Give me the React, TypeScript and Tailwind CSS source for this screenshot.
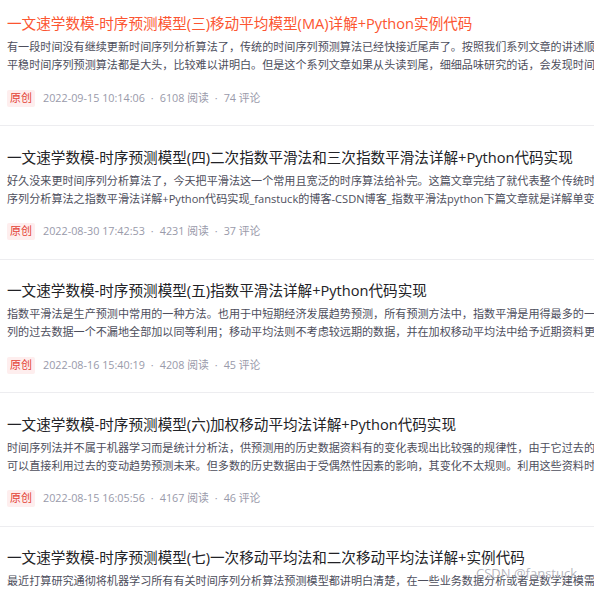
import React from "react";

type Item = {
  title: string;
  l1: string;
  l2?: string;
  date: string;
  views: string;
  comments: string;
  active?: boolean;
};

const items: Item[] = [
  {
    title: "一文速学数模-时序预测模型(三)移动平均模型(MA)详解+Python实例代码",
    l1: "有一段时间没有继续更新时间序列分析算法了，传统的时间序列预测算法已经快接近尾声了。按照我们系列文章的讲述顺序，接下来",
    l2: "平稳时间序列预测算法都是大头，比较难以讲明白。但是这个系列文章如果从头读到尾，细细品味研究的话，会发现时间序列",
    date: "2022-09-15 10:14:06",
    views: "6108",
    comments: "74",
    active: true,
  },
  {
    title: "一文速学数模-时序预测模型(四)二次指数平滑法和三次指数平滑法详解+Python代码实现",
    l1: "好久没来更时间序列分析算法了，今天把平滑法这一个常用且宽泛的时序算法给补完。这篇文章完结了就代表整个传统时间",
    l2: "序列分析算法之指数平滑法详解+Python代码实现_fanstuck的博客-CSDN博客_指数平滑法python下篇文章就是详解单变量",
    date: "2022-08-30 17:42:53",
    views: "4231",
    comments: "37",
  },
  {
    title: "一文速学数模-时序预测模型(五)指数平滑法详解+Python代码实现",
    l1: "指数平滑法是生产预测中常用的一种方法。也用于中短期经济发展趋势预测，所有预测方法中，指数平滑是用得最多的一种。",
    l2: "列的过去数据一个不漏地全部加以同等利用；移动平均法则不考虑较远期的数据，并在加权移动平均法中给予近期资料更大的权重",
    date: "2022-08-16 15:40:19",
    views: "4208",
    comments: "45",
  },
  {
    title: "一文速学数模-时序预测模型(六)加权移动平均法详解+Python代码实现",
    l1: "时间序列法并不属于机器学习而是统计分析法，供预测用的历史数据资料有的变化表现出比较强的规律性，由于它过去的变动趋势",
    l2: "可以直接利用过去的变动趋势预测未来。但多数的历史数据由于受偶然性因素的影响，其变化不太规则。利用这些资料时",
    date: "2022-08-15 16:05:56",
    views: "4167",
    comments: "46",
  },
  {
    title: "一文速学数模-时序预测模型(七)一次移动平均法和二次移动平均法详解+实例代码",
    l1: "最近打算研究通彻将机器学习所有有关时间序列分析算法预测模型都讲明白清楚，在一些业务数据分析或者是数学建模需求中",
    l2: "经常会用到时间序列分析算法，所以本系列文章将会把时间序列分析算法全部讲解清楚",
    date: "2022-08-10 11:20:31",
    views: "3980",
    comments: "40",
  },
];

const font = {
  fontFamily: '"Open Sans", "Noto Sans CJK SC", sans-serif',
};

export default function App() {
  return (
    <div
      className="relative h-[590px] w-[594px] overflow-hidden bg-white"
      style={font}
    >
      <div className="-mt-[7.5px] w-[900px]">
        {items.map((it, i) => (
          <div
            key={i}
            className="border-b border-[#ededf0] pl-[7px] pt-[20.5px] pb-[19px]"
          >
            <div
              className={`h-[20px] whitespace-nowrap text-[14.6px] leading-[20px] ${
                it.active ? "text-[#fc5531]" : "text-[#222226]"
              }`}
            >
              {it.title}
            </div>
            <div className="mt-[5px] text-[11.1px] leading-[18px] text-[#4d4e5c]">
              <div className="h-[18px] whitespace-nowrap">{it.l1}</div>
              <div className="h-[18px] whitespace-nowrap">{it.l2}</div>
            </div>
            <div className="mt-[16px] flex h-[16px] items-center text-[10.8px] text-[#999aaa]">
              <span className="flex h-[17px] items-center rounded-[2px] bg-[#feeeee] px-[3px] text-[11px] text-[#e33e33]">
                原创
              </span>
              <span className="ml-[8px]">{it.date}</span>
              <span className="mx-[6px]">·</span>
              <span>{it.views} 阅读</span>
              <span className="mx-[6px]">·</span>
              <span>{it.comments} 评论</span>
            </div>
          </div>
        ))}
      </div>
      <div className="absolute left-[476px] top-[564px] text-[13px] leading-[18px] text-[#a9a9b2]/85">
        CSDN @fanstuck
      </div>
    </div>
  );
}
